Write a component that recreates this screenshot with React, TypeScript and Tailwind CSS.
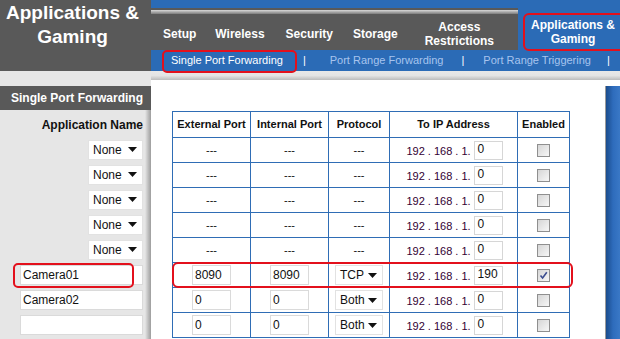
import React from 'react'

const DARK = 'bg-[#595959]'
const FONT = { fontFamily: '"Liberation Sans", Arial, sans-serif' }

type Row = {
    ext?: string
    int?: string
    proto?: string
    ip: string
    on?: boolean
}

const ROWS: Row[] = [
    { ip: '0' },
    { ip: '0' },
    { ip: '0' },
    { ip: '0' },
    { ip: '0' },
    { ext: '8090', int: '8090', proto: 'TCP', ip: '190', on: true },
    { ext: '0', int: '0', proto: 'Both', ip: '0' },
    { ext: '0', int: '0', proto: 'Both', ip: '0' },
]

const LEFT_ROWS: { kind: 'select' | 'input'; value: string }[] = [
    { kind: 'select', value: 'None' },
    { kind: 'select', value: 'None' },
    { kind: 'select', value: 'None' },
    { kind: 'select', value: 'None' },
    { kind: 'select', value: 'None' },
    { kind: 'input', value: 'Camera01' },
    { kind: 'input', value: 'Camera02' },
    { kind: 'input', value: '' },
]

function Arrow() {
    return (
        <svg width="9" height="5" viewBox="0 0 9 5" className="shrink-0">
            <polygon points="0,0 9,0 4.5,5" fill="#111" />
        </svg>
    )
}

function FakeSelect({ value, width }: { value: string; width: string }) {
    return (
        <div className={`${width} h-[20px] bg-white border border-[#e2e2e2] flex items-center justify-between pl-[4px] pr-[5px] text-[12px] text-[#111]`}>
            <span>{value}</span>
            <Arrow />
        </div>
    )
}

function Box({ value, width }: { value: string; width: string }) {
    return (
        <div className={`${width} h-[20px] bg-white border border-[#dadada] flex items-center px-[2px] text-[12px] text-[#111]`}>
            {value}
        </div>
    )
}

function Check({ on }: { on?: boolean }) {
    return (
        <div className="w-[13px] h-[13px] border border-[#8f8f8f] bg-gradient-to-br from-[#d6d6d6] to-[#f7f7f7] flex items-center justify-center">
            {on && (
                <svg width="9" height="9" viewBox="0 0 9 9">
                    <path d="M1.5 4.5 L3.6 7 L7.8 1.2" stroke="#3b4c8f" strokeWidth="1.6" fill="none" />
                </svg>
            )}
        </div>
    )
}

export default function App() {
    return (
        <div className="relative w-[620px] h-[339px] overflow-hidden flex bg-white" style={FONT}>
            {/* Colonne gauche */}
            <div className="w-[151px] shrink-0 flex flex-col min-h-0">
                <div className={`h-[71px] shrink-0 ${DARK} flex flex-col items-center pt-[1px] text-white font-bold text-[19px] leading-[24px] pr-[6px]`}>
                    <span>Applications &amp;</span>
                    <span>Gaming</span>
                </div>
                <div className="h-[15px] shrink-0 bg-[#e6e6e6]" />
                <div className={`h-[24px] shrink-0 ${DARK} flex items-center justify-end pr-[8px] text-white font-bold text-[12px]`}>
                    Single Port Forwarding
                </div>
                <div className="flex-1 min-h-0 flex bg-[#e6e6e6]">
                    <div className="flex-1 flex flex-col items-end pr-[2px]">
                        <div className="h-[27px] shrink-0 flex items-center font-bold text-[12px] text-[#111] pt-[2px]">
                            Application Name
                        </div>
                        {LEFT_ROWS.map((r, i) => (
                            <div key={i} className="h-[25px] shrink-0 flex items-center">
                                {r.kind === 'select' ? (
                                    <FakeSelect value={r.value} width="w-[55px]" />
                                ) : (
                                    <Box value={r.value} width="w-[123px]" />
                                )}
                            </div>
                        ))}
                    </div>
                    <div className="w-[6px] bg-gradient-to-r from-[#e6e6e6] to-[#9d9d9d]" />
                </div>
            </div>

            {/* Colonne droite */}
            <div className="flex-1 flex flex-col min-h-0">
                <div className="h-[50px] shrink-0 flex">
                    <div className="flex-1 flex flex-col">
                        <div className="h-[8px] shrink-0 bg-[#2b6bb6]" />
                        <div className={`h-[2px] shrink-0 ${DARK}`} />
                        <div className="h-[4px] shrink-0 bg-gradient-to-b from-[#d9d9d9] to-[#7d7d7d]" />
                        <div className={`flex-1 ${DARK} flex items-center pl-[12px] pt-[4px] text-white font-bold text-[12px] leading-[14px]`}>
                            <span>Setup</span>
                            <span className="ml-[19px]">Wireless</span>
                            <span className="ml-[21px]">Security</span>
                            <span className="ml-[20px]">Storage</span>
                            <span className="ml-[27px] text-center">
                                Access
                                <br />
                                Restrictions
                            </span>
                        </div>
                    </div>
                    <div className="w-[102px] bg-[#2b6bb6] flex items-center justify-center pt-[14px] text-white font-bold text-[12px] leading-[14px] text-center pl-[8px]">
                        <span>
                            Applications &amp;
                            <br />
                            Gaming
                        </span>
                    </div>
                </div>
                <div className="h-[21px] shrink-0 bg-[#2b6bb6] flex items-center text-[11px] text-[#a7c4ee]">
                    <span className="ml-[20px] text-white">Single Port Forwarding</span>
                    <span className="ml-[20px] text-white">|</span>
                    <span className="ml-[24px]">Port Range Forwarding</span>
                    <span className="ml-[18px] text-white">|</span>
                    <span className="ml-[19px]">Port Range Triggering</span>
                    <span className="ml-[16px] text-white">|</span>
                </div>
                <div className="h-[9px] shrink-0 bg-gradient-to-b from-[#e8e8e8] via-[#e4e4e4] to-[#bdbdbd]" />
                <div className="flex-1 min-h-0 flex">
                    <div className="flex-1 pt-[31px] pl-[21px]">
                        <table className="border-collapse text-[#111]">
                            <thead>
                                <tr className="h-[26px]">
                                    <th className="w-[78px] border border-[#2f6db5] text-[11px] font-bold">External Port</th>
                                    <th className="w-[78px] border border-[#2f6db5] text-[11px] font-bold">Internal Port</th>
                                    <th className="w-[61px] border border-[#2f6db5] text-[11px] font-bold">Protocol</th>
                                    <th className="w-[128px] border border-[#2f6db5] text-[11px] font-bold">To IP Address</th>
                                    <th className="w-[52px] border border-[#2f6db5] text-[11px] font-bold">Enabled</th>
                                </tr>
                            </thead>
                            <tbody>
                                {ROWS.map((r, i) => (
                                    <tr key={i} className="h-[25px]">
                                        <td className="border border-[#2f6db5] p-0">
                                            <div className="flex justify-center text-[11px]">
                                                {r.ext ? <Box value={r.ext} width="w-[39px]" /> : '---'}
                                            </div>
                                        </td>
                                        <td className="border border-[#2f6db5] p-0">
                                            <div className="flex justify-center text-[11px]">
                                                {r.int ? <Box value={r.int} width="w-[39px]" /> : '---'}
                                            </div>
                                        </td>
                                        <td className="border border-[#2f6db5] p-0">
                                            <div className="flex justify-center text-[11px]">
                                                {r.proto ? <FakeSelect value={r.proto} width="w-[48px]" /> : '---'}
                                            </div>
                                        </td>
                                        <td className="border border-[#2f6db5] p-0">
                                            <div className="flex items-center justify-center gap-[3px] pl-[2px]">
                                                <span className="text-[11px] text-[#330033] pt-[3px]">192 . 168 . 1.</span>
                                                <div className="w-[29px] h-[19px] bg-white border border-[#d6d6d6] text-[12px] leading-[14px] px-[3px]">
                                                    {r.ip}
                                                </div>
                                            </div>
                                        </td>
                                        <td className="border border-[#2f6db5] p-0">
                                            <div className="flex justify-center">
                                                <Check on={r.on} />
                                            </div>
                                        </td>
                                    </tr>
                                ))}
                            </tbody>
                        </table>
                    </div>
                    <div className="w-[15px] mt-[6px] flex">
                        <div className="w-[1px] bg-[#9a9a9a]" />
                        <div className="flex-1 bg-gradient-to-r from-[#1b4c8c] via-[#2e6cbc] to-[#3a78c6]" />
                    </div>
                </div>
            </div>

            {/* Encadrés rouges */}
            <div className="absolute left-[162px] top-[50px] w-[135px] h-[23px] border-2 border-[#e3101c] rounded-[5px]" />
            <div className="absolute left-[523px] top-[13px] w-[104px] h-[38px] border-2 border-[#e3101c] rounded-[6px]" />
            <div className="absolute left-[13px] top-[263px] w-[121px] h-[25px] border-2 border-[#e3101c] rounded-[5px]" />
            <div className="absolute left-[172px] top-[262px] w-[401px] h-[26px] border-2 border-[#e3101c] rounded-[6px]" />
        </div>
    )
}
